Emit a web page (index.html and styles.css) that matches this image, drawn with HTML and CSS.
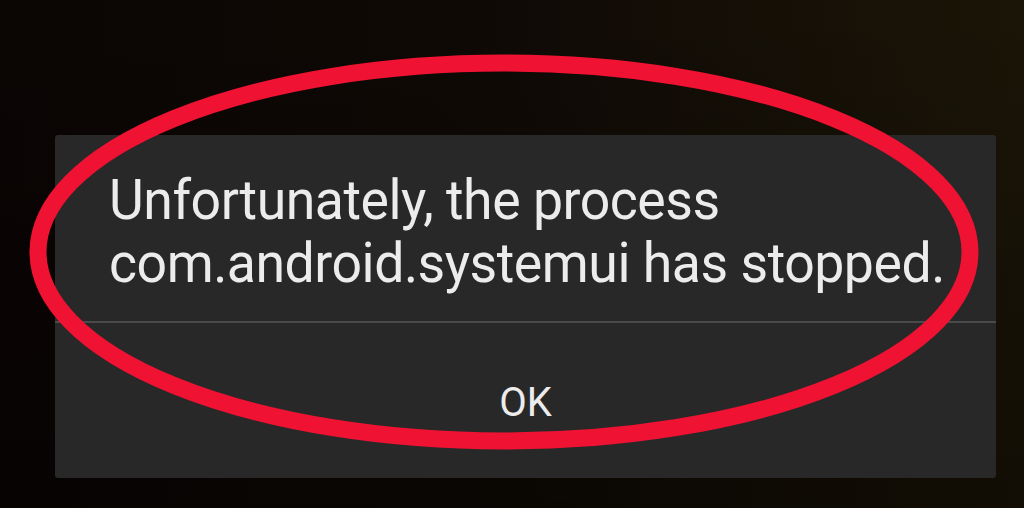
FILE: index.html
```html
<!DOCTYPE html>
<html>
<head>
<meta charset="utf-8">
<link rel="stylesheet" href="styles.css">
</head>
<body>
<div class="screen">
  <div class="dialog">
    <div class="message">
      <p class="text">Unfortunately, the process<br>com.android.systemui has stopped.</p>
    </div>
    <div class="divider"></div>
    <div class="actions">
      <span class="ok">OK</span>
    </div>
  </div>
  <svg class="circle" width="1024" height="508" viewBox="0 0 1024 508">
    <ellipse cx="504" cy="252" rx="466" ry="189" fill="none" stroke="#f01232" stroke-width="17"/>
  </svg>
</div>
</body>
</html>
```
FILE: styles.css
```css
html, body {
  margin: 0;
  padding: 0;
}
body {
  width: 1024px;
  height: 508px;
  overflow: hidden;
  background: #050303;
}
.screen {
  position: relative;
  width: 1024px;
  height: 508px;
  box-sizing: border-box;
  padding: 135px 28px 30px 55px;
  background:
    linear-gradient(180deg, rgba(0,0,0,0) 0%, rgba(0,0,0,0.35) 100%),
    linear-gradient(90deg, #0b0504 0%, #0e0905 45%, #1b1507 100%);
  font-family: Roboto, "Noto Sans", sans-serif;
}
.dialog {
  width: 941px;
  height: 343px;
  background: #282828;
  border-radius: 3px;
  display: flex;
  flex-direction: column;
}
.message {
  height: 186px;
  box-sizing: border-box;
  padding: 34px 0 0 54px;
}
.text {
  margin: 0;
  color: #ececec;
  font-size: 56px;
  line-height: 63px;
  letter-spacing: -0.5px;
  transform: scaleX(0.957);
  transform-origin: 0 0;
  white-space: nowrap;
}
.divider {
  height: 2px;
  background: #4a4a4a;
}
.actions {
  flex: 1;
  display: flex;
  justify-content: center;
  padding-top: 56px;
  box-sizing: border-box;
}
.ok {
  color: #ececec;
  font-size: 40px;
  line-height: 48px;
}
.circle {
  position: absolute;
  left: 0;
  top: 0;
  pointer-events: none;
}
```
